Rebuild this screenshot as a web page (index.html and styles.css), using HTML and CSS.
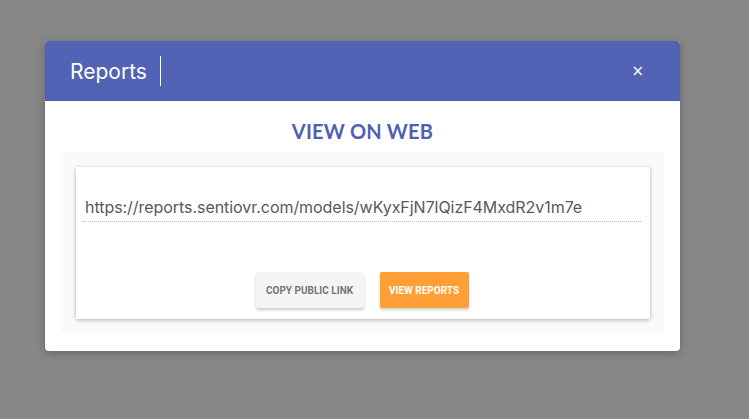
FILE: index.html
```html
<!DOCTYPE html>
<html>
<head>
<meta charset="utf-8">
<link rel="stylesheet" href="styles.css">
</head>
<body>
<div class="modal">
  <div class="modal-header">
    <span class="modal-title">Reports</span>
    <span class="title-divider"></span>
    <span class="close">×</span>
  </div>
  <div class="modal-body">
    <h2 class="heading">VIEW ON WEB</h2>
    <div class="panel">
      <div class="card">
        <div class="url-field">https://reports.sentiovr.com/models/wKyxFjN7lQizF4MxdR2v1m7e</div>
        <div class="actions">
          <button class="btn btn-light">COPY PUBLIC LINK</button>
          <button class="btn btn-orange">VIEW REPORTS</button>
        </div>
      </div>
    </div>
  </div>
</div>
</body>
</html>
```
FILE: styles.css
```css
html, body {
  margin: 0;
  padding: 0;
  background: #878787;
  height: 100%;
}
body {
  padding: 41px 0 0 45px;
  box-sizing: border-box;
  font-family: Inter, "Noto Sans", sans-serif;
}
.modal {
  width: 635px;
  height: 310px;
  background: #fff;
  border-radius: 4px;
  overflow: hidden;
  box-shadow: 0 2px 8px rgba(0,0,0,0.25);
  display: flex;
  flex-direction: column;
}
.modal-header {
  height: 60px;
  background: #5262b4;
  display: flex;
  align-items: center;
  padding: 0 36px 0 25px;
  color: #fff;
}
.modal-title {
  font-size: 21px;
  font-weight: 400;
}
.title-divider {
  width: 1.5px;
  height: 30px;
  background: #fff;
  margin-left: 13px;
}
.close {
  margin-left: auto;
  font-family: "DejaVu Sans", sans-serif;
  font-size: 15px;
  line-height: 1;
}
.modal-body {
  display: flex;
  flex-direction: column;
  padding: 0 16px 18px;
  flex: 1;
}
.heading {
  margin: 0;
  height: 51px;
  line-height: 60px;
  text-align: center;
  font-family: Lato, sans-serif;
  font-weight: 700;
  font-size: 20px;
  color: #4f5fb3;
  letter-spacing: 0.2px;
}
.panel {
  flex: 1;
  background: #fafafa;
  padding: 15px 14px 14px 15px;
  display: flex;
}
.card {
  flex: 1;
  background: #fff;
  box-shadow: 0 1px 4px rgba(0,0,0,0.3);
  display: flex;
  flex-direction: column;
  padding: 0 9px 0 7px;
}
.url-field {
  margin-top: 30px;
  padding: 0 0 4px 2px;
  font-size: 16px;
  letter-spacing: -0.05px;
  color: #555a60;
  border-bottom: 1px dotted #bdbdbd;
  white-space: nowrap;
}
.actions {
  margin-top: auto;
  margin-bottom: 11px;
  display: flex;
  justify-content: center;
  gap: 16px;
}
.btn {
  height: 36px;
  border: none;
  border-radius: 2px;
  font-family: Roboto, sans-serif;
  font-weight: 700;
  font-size: 10px;
  padding: 0;
  box-shadow: 0 2px 3px rgba(0,0,0,0.2);
}
.btn-light {
  background: #f5f5f5;
  color: #757575;
  width: 108px;
}
.btn-orange {
  background: #ff9f36;
  color: #fff;
  width: 89px;
}
```
